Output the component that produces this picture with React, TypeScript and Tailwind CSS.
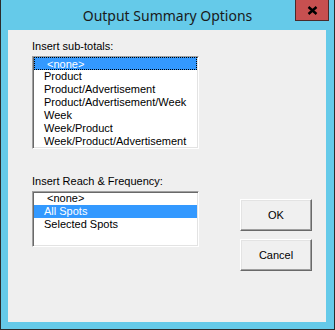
import React from "react";

const font = { fontFamily: '"Liberation Sans", Arial, sans-serif' };

function ListBox({ items, selected, focus, height }: { items: string[]; selected: number; focus?: boolean; height: string }) {
  return (
    <div
      className={`w-[167px] ${height} bg-white border border-t-[#a0a0a0] border-l-[#a0a0a0] border-r-[#ffffff] border-b-[#ffffff] shadow-[inset_1px_1px_0_#696969,inset_-1px_-1px_0_#e3e3e3] overflow-hidden`}
    >
      <div className="pt-[0px] pl-[1px] pr-[1px]">
        {items.map((it, i) => (
          <div
            key={i}
            className={
              "h-[13px] leading-[13px] text-[11px] whitespace-pre " +
              (i === selected ? "bg-[#3399ff] text-white " : "text-black ") +
              (i === selected && focus ? "border border-dotted border-black leading-[11px] pl-[9px]" : "pl-[10px]")
            }
          >
            {it}
          </div>
        ))}
      </div>
    </div>
  );
}

function Btn({ label }: { label: string }) {
  return (
    <div className="w-[72px] h-[32px] bg-[#f0f0f0] border border-t-white border-l-white border-r-[#696969] border-b-[#696969] shadow-[inset_-1px_-1px_0_#a0a0a0,inset_1px_1px_0_#e3e3e3] flex items-center justify-center text-[11px] text-black">
      {label}
    </div>
  );
}

export default function App() {
  return (
    <div className="w-[335px] h-[330px] bg-[#65cae9] border-l border-r border-b border-[#2b2b2b] flex flex-col" style={font}>
      <div className="relative h-[30px] flex items-center justify-center">
        <span className="text-[14px] text-[#1a1a1a]" style={{ fontFamily: '"Noto Sans", "Open Sans", sans-serif' }}>
          Output Summary Options
        </span>
        <div className="absolute right-[5px] top-0 w-[34px] h-[21px] bg-[#c75050] border border-[#4a2a2a] border-t-0 flex items-center justify-center">
          <svg width="11" height="9" viewBox="0 0 11 9">
            <path d="M1.5 1 L9.5 8 M9.5 1 L1.5 8" stroke="#000" strokeWidth="2.4" />
          </svg>
        </div>
      </div>
      <div className="ml-[7px] w-[318px] h-[292px] bg-[#efefef] flex">
        <div className="pl-[24px] pt-[10px] flex flex-col">
          <div className="h-[13px] leading-[13px] text-[11px] text-black">Insert sub-totals:</div>
          <div className="mt-[3px]">
            <ListBox
              height="h-[93px]"
              selected={0}
              focus
              items={[
                " <none>",
                "Product",
                "Product/Advertisement",
                "Product/Advertisement/Week",
                "Week",
                "Week/Product",
                "Week/Product/Advertisement",
              ]}
            />
          </div>
          <div className="mt-[26px] h-[13px] leading-[13px] text-[11px] text-black">Insert Reach &amp; Frequency:</div>
          <div className="mt-[3px]">
            <ListBox height="h-[56px]" selected={1} items={[" <none>", "All Spots", "Selected Spots"]} />
          </div>
        </div>
        <div className="ml-[41px] pt-[169px] flex flex-col gap-[8px]">
          <Btn label="OK" />
          <Btn label="Cancel" />
        </div>
      </div>
    </div>
  );
}
